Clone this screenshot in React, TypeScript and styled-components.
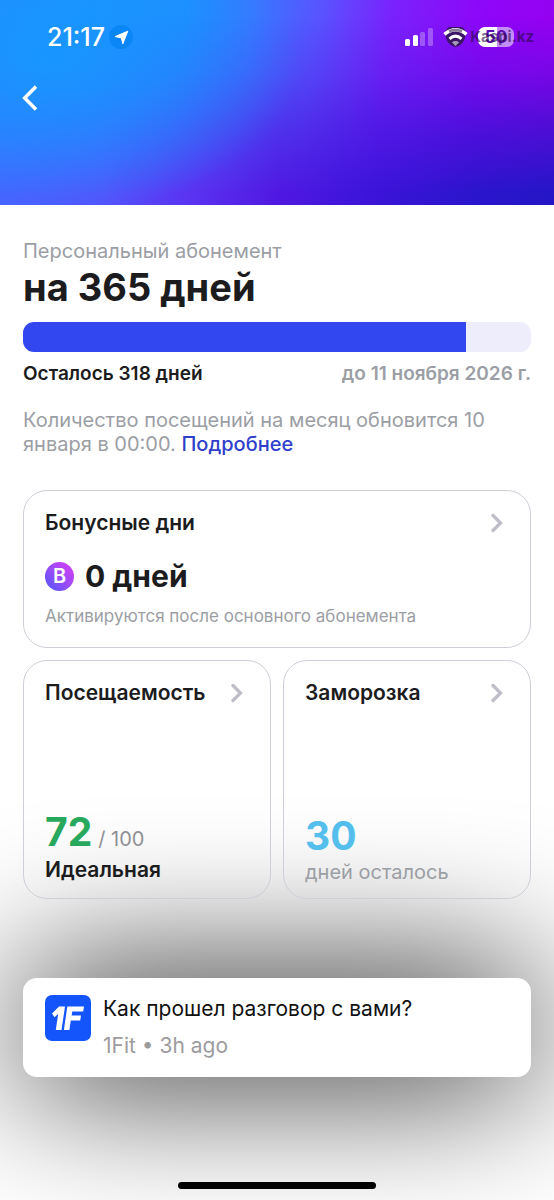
import React from "react";
import styled, { createGlobalStyle } from "styled-components";

const GlobalStyle = createGlobalStyle`
  *, *::before, *::after { box-sizing: border-box; }
  html, body, #root { min-height: 100%; }
  body {
    margin: 0;
    background: #ffffff;
    color: #1c1c1e;
    font-family: Inter, "Liberation Sans", sans-serif;
    overflow-x: hidden;
  }
`;

const Screen = styled.div`
  display: flex;
  flex-direction: column;
  min-height: 100vh;
  overflow: hidden;
`;

const Hero = styled.header`
  position: relative;
  isolation: isolate;
  height: 205px;
  padding: 20px 20px 0;
  color: #ffffff;
  background: linear-gradient(
    97deg,
    #2090ff 0%,
    #1896ff 16%,
    #1e8fff 32%,
    #3a76ff 44%,
    #5a52ff 56%,
    #7a22fc 68%,
    #8e06f8 84%,
    #9800f0 100%
  );

  /* Darker lower band that fades in towards the bottom edge. */
  &::before {
    content: "";
    position: absolute;
    inset: 0;
    z-index: -1;
    background: linear-gradient(
      90deg,
      #4a60ff 0%,
      #5553fc 18%,
      #5a30f0 36%,
      #5018e2 50%,
      #3a14d8 68%,
      #2a15cc 86%,
      #2416c6 100%
    );
    mask-image: linear-gradient(180deg, transparent 8%, rgba(0, 0, 0, 0.25) 35%, rgba(0, 0, 0, 0.6) 60%, #000000 95%);
  }

  &::after {
    content: "";
    position: absolute;
    inset: 0;
    z-index: -1;
    background: radial-gradient(ellipse 46% 75% at 8% 30%, rgba(22, 152, 255, 0.85) 0%, rgba(26, 146, 255, 0.6) 45%, rgba(40, 130, 255, 0) 100%);
  }
`;

const StatusBar = styled.div`
  display: flex;
  align-items: center;
  justify-content: space-between;
  height: 34px;
  padding-left: 27px;
`;

const Clock = styled.div`
  display: flex;
  align-items: center;
  gap: 4px;
  font-size: 25px;
  font-weight: 500;
  line-height: 34px;
`;

const LocationDot = styled.span`
  display: grid;
  place-items: center;
  width: 24px;
  height: 24px;
  border-radius: 50%;
  background: #0a86f6;
`;

const Indicators = styled.div`
  position: relative;
  display: flex;
  align-items: center;
  gap: 10px;
  padding-right: 20px;
`;

const Battery = styled.span`
  display: grid;
  place-items: center;
  width: 36px;
  height: 20px;
  border-radius: 7px;
  background: linear-gradient(90deg, #ffffff 54%, #c48cf8 54%);
  color: #5a10b0;
  font-size: 17px;
  font-weight: 700;
  line-height: 20px;
`;

const Watermark = styled.span`
  position: absolute;
  top: 0;
  right: 0;
  color: rgba(40, 8, 70, 0.62);
  font-size: 15px;
  font-weight: 700;
  line-height: 20px;
`;

const BackButton = styled.button`
  display: grid;
  place-items: center start;
  width: 24px;
  height: 40px;
  margin-top: 24px;
  padding: 0;
  border: 0;
  background: none;
  color: #ffffff;
  cursor: pointer;
`;

const Content = styled.main`
  flex: 1;
  display: flex;
  flex-direction: column;
  padding: 34px 23px 0;
`;

const Caption = styled.p`
  margin: 0;
  color: #9b9ea4;
  font-size: 20px;
  line-height: 24px;
`;

const Title = styled.h1`
  margin: 0;
  font-size: 38px;
  font-weight: 700;
  line-height: 48px;
`;

const Progress = styled.div`
  height: 30px;
  margin-top: 11px;
  border-radius: 11px;
  background: #eeedfb;
  overflow: hidden;
`;

const ProgressFill = styled.div`
  height: 100%;
  background: #3347f0;
`;

const Dates = styled.div`
  display: flex;
  justify-content: space-between;
  margin-top: 10px;
  font-size: 19px;
  font-weight: 600;
  line-height: 24px;
`;

const Muted = styled.span`
  color: #9b9ea4;
`;

const Note = styled(Caption)`
  margin-top: 22px;
`;

const MoreLink = styled.a`
  color: #2f3fcb;
  font-weight: 500;
  text-decoration: none;
`;

const Cards = styled.section`
  display: grid;
  grid-template-columns: 1fr 1fr;
  gap: 12px;
  margin-top: 34px;
`;

const Card = styled.a<{ $wide?: boolean }>`
  grid-column: ${(p) => (p.$wide ? "1 / -1" : "auto")};
  display: flex;
  flex-direction: column;
  justify-content: ${(p) => (p.$wide ? "flex-start" : "space-between")};
  min-height: ${(p) => (p.$wide ? 158 : 239)}px;
  padding: 18px 21px 14px;
  border: 1px solid #cfced8;
  border-radius: 24px;
  color: inherit;
  text-decoration: none;
`;

const CardHead = styled.div`
  display: flex;
  align-items: center;
  justify-content: space-between;
  padding-right: 6px;
`;

const CardTitle = styled.h2`
  margin: 0;
  font-size: 21px;
  font-weight: 600;
  line-height: 28px;
`;

const BonusRow = styled.div`
  display: flex;
  align-items: center;
  gap: 11px;
  margin: 21px 0 10px;
  font-size: 30px;
  font-weight: 700;
  line-height: 36px;
`;

const BonusBadge = styled.span`
  display: grid;
  place-items: center;
  width: 29px;
  height: 29px;
  border-radius: 50%;
  background: linear-gradient(45deg, #5555fa 5%, #9a4cf8 50%, #d83cf4 95%);
  color: #ffffff;
  font-size: 20px;
  font-weight: 600;
  line-height: 29px;
`;

const Small = styled.p`
  margin: 0;
  color: #9b9ea4;
  font-size: 17px;
  line-height: 24px;
`;

const Score = styled.div<{ $color: string }>`
  color: ${(p) => p.$color};
  font-size: 39px;
  font-weight: 700;
  line-height: 48px;
`;

const OutOf = styled.span`
  margin-left: 6px;
  color: #8e9096;
  font-size: 20px;
  font-weight: 400;
  line-height: 20px;
`;

const Verdict = styled.p`
  margin: 0;
  font-size: 21px;
  font-weight: 600;
  line-height: 28px;
`;

const Notice = styled.a`
  position: relative;
  display: flex;
  gap: 12px;
  min-height: 99px;
  margin-top: 79px;
  padding: 17px 22px;
  border-radius: 14px;
  background: #ffffff;
  color: #111111;
  text-decoration: none;

  /* Wide soft shadow, painted behind the cards. */
  &::before {
    content: "";
    position: absolute;
    inset: 0;
    z-index: -1;
    background: #000000;
    filter: blur(76px);
  }
`;

const NoticeText = styled.div`
  display: flex;
  flex-direction: column;
  gap: 9px;
  font-size: 21px;
  line-height: 28px;
`;

const NoticeMeta = styled.span`
  color: #9c9c9e;
`;

const HomeIndicator = styled.div`
  position: relative;
  width: 198px;
  height: 7px;
  margin: 0 auto 11px;
  border-radius: 4px;
  background: #000000;
`;

const Chevron = () => (
  <svg width="12" height="20" viewBox="0 0 12 20" fill="none" aria-hidden="true">
    <path d="M2 2.500 9.500 10 2 17.500" stroke="#bfbdca" strokeWidth="3.300" strokeLinecap="round" strokeLinejoin="miter" />
  </svg>
);

const SignalIcon = () => (
  <svg width="28" height="18" viewBox="0 0 28 18" fill="#ffffff" aria-hidden="true">
    <rect x="0" y="11" width="5" height="7" rx="1.5" />
    <rect x="8" y="7" width="5" height="11" rx="1.5" />
    <rect x="15" y="4" width="5" height="14" rx="1.5" opacity="0.28" />
    <rect x="23" y="0" width="5" height="18" rx="1.5" opacity="0.28" />
  </svg>
);

const WifiIcon = () => (
  <svg width="25" height="20" viewBox="0 0 25 20" fill="none" aria-hidden="true">
    <path d="M2 5A11.5 11.5 0 0 1 23 5L22 11Q20 18 12.500 20 5 18 3 11Z" fill="#3a1466" />
    <path d="M1.500 7.300Q12.500-1.800 23.500 7.300" stroke="#ffffff" strokeWidth="3.600" />
    <path d="M6 4.300Q12.500 1.500 19 4.300" stroke="#8b7b9b" strokeWidth="3" />
    <path d="M6.500 11.800Q12.500 6.500 18.500 11.800" stroke="#ffffff" strokeWidth="3" />
    <path d="m12.500 19-3.600-3.700q3.600-2.800 7.200 0Z" fill="#a99bb5" />
  </svg>
);

const AppLogo = () => (
  <svg width="46" height="46" viewBox="0 0 46 46" role="img" aria-label="1Fit">
    <rect width="46" height="46" rx="7" fill="#1355fb" />
    <path d="M14 11.500H20L16.500 35H10.800L13.200 19 9.500 22.200 7 18.500Z" fill="#ffffff" />
    <path d="M22.300 11.500H39L38.200 16.500H27.300L26.600 20.500H36L35.200 25.400H25.800L24.400 35H18.900Z" fill="#ffffff" />
  </svg>
);

const TOTAL_DAYS = 365;
const LEFT_DAYS = 318;

export default function App() {
  return (
    <>
      <GlobalStyle />
      <Screen>
        <Hero>
          <StatusBar>
            <Clock>
              21:17
              <LocationDot>
                <svg width="15" height="15" viewBox="0 0 15 15" fill="#ffffff" aria-hidden="true">
                  <path d="M13.800 1.200 8.800 13.800 7.300 7.800 1 6.600Z" stroke="#ffffff" strokeLinejoin="round" />
                </svg>
              </LocationDot>
            </Clock>
            <Indicators>
              <SignalIcon />
              <WifiIcon />
              <Battery>50</Battery>
              <Watermark>Kaspi.kz</Watermark>
            </Indicators>
          </StatusBar>
          <BackButton type="button" aria-label="Назад">
            <svg width="18" height="28" viewBox="0 0 18 28" fill="none" aria-hidden="true">
              <path d="M16 2.500 4.700 14 16 25.500" stroke="#ffffff" strokeWidth="3.500" />
            </svg>
          </BackButton>
        </Hero>

        <Content>
          <Caption>Персональный абонемент</Caption>
          <Title>на 365 дней</Title>
          <Progress role="progressbar" aria-label="Осталось дней" aria-valuenow={LEFT_DAYS} aria-valuemin={0} aria-valuemax={TOTAL_DAYS}>
            <ProgressFill style={{ width: `${(LEFT_DAYS / TOTAL_DAYS) * 100}%` }} />
          </Progress>
          <Dates>
            <span>Осталось 318 дней</span>
            <Muted>до 11 ноября 2026 г.</Muted>
          </Dates>
          <Note>
            Количество посещений на месяц обновится 10 января в 00:00. <MoreLink href="#details">Подробнее</MoreLink>
          </Note>

          <Cards>
            <Card $wide href="#bonus">
              <CardHead>
                <CardTitle>Бонусные дни</CardTitle>
                <Chevron />
              </CardHead>
              <BonusRow>
                <BonusBadge>B</BonusBadge>0 дней
              </BonusRow>
              <Small>Активируются после основного абонемента</Small>
            </Card>
            <Card href="#attendance">
              <CardHead>
                <CardTitle>Посещаемость</CardTitle>
                <Chevron />
              </CardHead>
              <div>
                <Score $color="#27a85c">
                  72<OutOf>/ 100</OutOf>
                </Score>
                <Verdict>Идеальная</Verdict>
              </div>
            </Card>
            <Card href="#freeze">
              <CardHead>
                <CardTitle>Заморозка</CardTitle>
                <Chevron />
              </CardHead>
              <div>
                <Score $color="#54bfec">30</Score>
                <Caption>дней осталось</Caption>
              </div>
            </Card>
          </Cards>

          <Notice href="#survey">
            <AppLogo />
            <NoticeText>
              <span>Как прошел разговор с вами?</span>
              <NoticeMeta>1Fit • 3h ago</NoticeMeta>
            </NoticeText>
          </Notice>
        </Content>
        <HomeIndicator />
      </Screen>
    </>
  );
}
